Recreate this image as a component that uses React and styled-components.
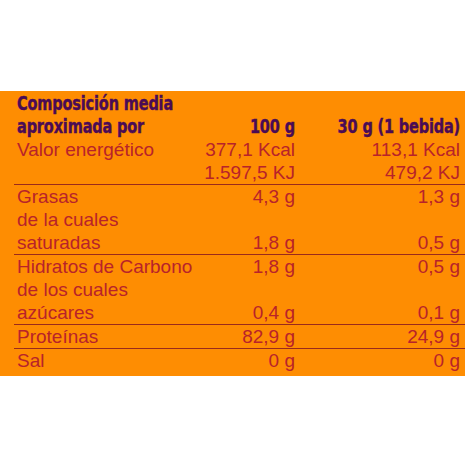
import React from 'react';
import styled, { createGlobalStyle } from 'styled-components';

const GlobalStyle = createGlobalStyle`
  html, body {
    margin: 0;
    padding: 0;
    background: #fff;
  }
`;

const Page = styled.div`
  width: 465px;
  height: 465px;
  padding-top: 91px;
  box-sizing: border-box;
  background: #fff;
`;

const Panel = styled.div`
  height: 285px;
  background: #fe8d02;
  padding-top: 1px;
  box-sizing: border-box;
`;

const Section = styled.div`
  margin-left: 14px;
  padding: 0 5px 0 3px;
  border-bottom: ${({ last }) => (last ? 'none' : '1px solid #9a2a1c')};
`;

const Line = styled.div`
  display: grid;
  grid-template-columns: minmax(0, 1fr) 120px 165px;
  height: 23px;
  line-height: 23px;
  white-space: nowrap;
`;

const Cell = styled.span`
  text-align: ${({ num }) => (num ? 'right' : 'left')};
  font-family: "Liberation Sans", Arial, sans-serif;
  font-size: 19px;
  color: #b8232a;
  overflow: visible;
`;

const Head = styled.span`
  display: inline-block;
  font-family: "DejaVu Sans Condensed", "Liberation Sans Narrow", sans-serif;
  font-weight: 700;
  font-size: 19px;
  letter-spacing: -0.2px;
  color: #4a0b55;
  -webkit-text-stroke: 0.4px #4a0b55;
  transform: scaleX(0.85);
  transform-origin: ${({ right }) => (right ? 'right center' : 'left center')};
`;

const sections = [
  [
    { label: 'Composición media', head: true },
    { label: 'aproximada por', a: '100 g', b: '30 g (1 bebida)', head: true },
    { label: 'Valor energético', a: '377,1 Kcal', b: '113,1 Kcal' },
    { label: '', a: '1.597,5 KJ', b: '479,2 KJ' },
  ],
  [
    { label: 'Grasas', a: '4,3 g', b: '1,3 g' },
    { label: 'de la cuales' },
    { label: 'saturadas', a: '1,8 g', b: '0,5 g' },
  ],
  [
    { label: 'Hidratos de Carbono', a: '1,8 g', b: '0,5 g' },
    { label: 'de los cuales' },
    { label: 'azúcares', a: '0,4 g', b: '0,1 g' },
  ],
  [{ label: 'Proteínas', a: '82,9 g', b: '24,9 g' }],
  [{ label: 'Sal', a: '0 g', b: '0 g' }],
];

const wrap = (text, head, right) =>
  head && text ? <Head right={right}>{text}</Head> : text;

const App = () => (
  <>
    <GlobalStyle />
    <Page>
      <Panel>
        {sections.map((lines, i) => (
          <Section key={i} last={i === sections.length - 1}>
            {lines.map((l, j) => (
              <Line key={j}>
                <Cell>{wrap(l.label, l.head, false)}</Cell>
                <Cell num>{wrap(l.a, l.head, true)}</Cell>
                <Cell num>{wrap(l.b, l.head, true)}</Cell>
              </Line>
            ))}
          </Section>
        ))}
      </Panel>
    </Page>
  </>
);

export default App;
